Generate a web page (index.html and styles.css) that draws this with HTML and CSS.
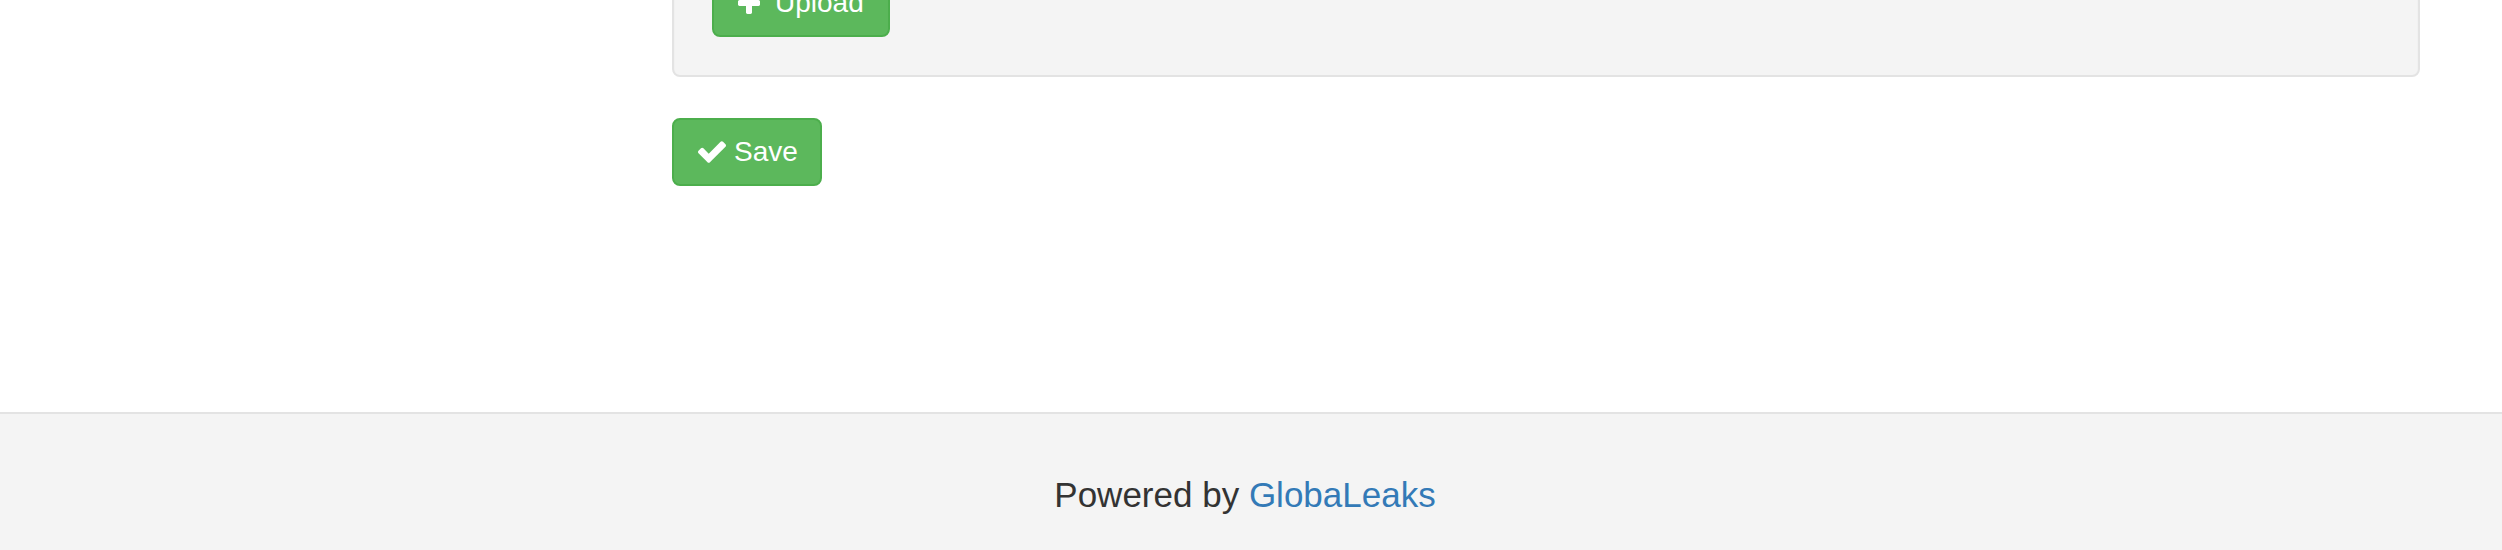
FILE: index.html
```html
<!DOCTYPE html>
<html lang="en">
<head>
<meta charset="utf-8">
<title>GlobaLeaks</title>
<link rel="stylesheet" href="styles.css">
</head>
<body>
<div class="page">
  <main class="layout">
    <aside class="sidebar"></aside>
    <section class="content">
      <div class="well">
        <button class="btn btn-success btn-upload" type="button">
          <svg class="icon icon-plus" viewBox="0 192 1408 1408" aria-hidden="true"><path d="M1408 800v192q0 40-28 68t-68 28h-416v416q0 40-28 68t-68 28h-192q-40 0-68-28t-28-68v-416h-416q-40 0-68-28t-28-68v-192q0-40 28-68t68-28h416v-416q0-40 28-68t68-28h192q40 0 68 28t28 68v416h416q40 0 68 28t28 68z"/></svg>
          <span>Upload</span>
        </button>
      </div>
      <button class="btn btn-success btn-save" type="submit">
        <svg class="icon icon-check" viewBox="121 334 1550 1188" aria-hidden="true"><path d="M1671 566q0 40-28 68l-724 724-136 136q-28 28-68 28t-68-28l-136-136-362-362q-28-28-28-68t28-68l136-136q28-28 68-28t68 28l294 295 656-657q28-28 68-28t68 28l136 136q28 28 28 68z"/></svg>
        <span>Save</span>
      </button>
    </section>
  </main>
  <footer class="footer">
    <p class="powered">Powered by <a href="#">GlobaLeaks</a></p>
  </footer>
</div>
</body>
</html>
```

FILE: styles.css
```css
* {
  box-sizing: border-box;
}

html, body {
  margin: 0;
  padding: 0;
  background: #ffffff;
}

body {
  font-family: "Liberation Sans", Arial, Helvetica, sans-serif;
  color: #333333;
}

.page {
  height: 550px;
  display: flex;
  flex-direction: column;
  overflow: hidden;
}

.layout {
  flex: 1;
  display: flex;
  min-height: 0;
}

.sidebar {
  flex: none;
  width: 672px;
}

.content {
  flex: none;
  width: 1748px;
  margin-top: -71px;
  display: flex;
  flex-direction: column;
  align-items: flex-start;
}

.well {
  width: 100%;
  background: #f4f4f4;
  border: 2px solid #e3e3e3;
  border-radius: 8px;
  box-shadow: inset 0 2px 2px rgba(0, 0, 0, 0.05);
  padding: 38px;
  margin-bottom: 41px;
}

.btn {
  display: inline-flex;
  align-items: center;
  height: 68px;
  padding: 0 24px;
  border: 2px solid #4cae4c;
  border-radius: 8px;
  background: #5cb85c;
  color: #ffffff;
  font-family: "Liberation Sans", Arial, Helvetica, sans-serif;
  font-size: 28px;
  line-height: 40px;
  cursor: pointer;
}

.icon {
  fill: #ffffff;
  flex: none;
}

.icon-check {
  width: 28px;
  height: 22px;
  margin-right: 8px;
}

.icon-plus {
  width: 22px;
  height: 22px;
  margin-right: 15px;
}

.btn-upload {
  width: 178px;
}

.btn-save {
  width: 150px;
}

.footer {
  flex: none;
  height: 138px;
  background: #f4f4f4;
  border-top: 2px solid #e3e3e3;
  padding: 56px 12px 0 0;
}

.powered {
  margin: 0;
  text-align: center;
  font-size: 35px;
  line-height: 50px;
  color: #333333;
}

.powered a {
  color: #337ab7;
  text-decoration: none;
}
```
